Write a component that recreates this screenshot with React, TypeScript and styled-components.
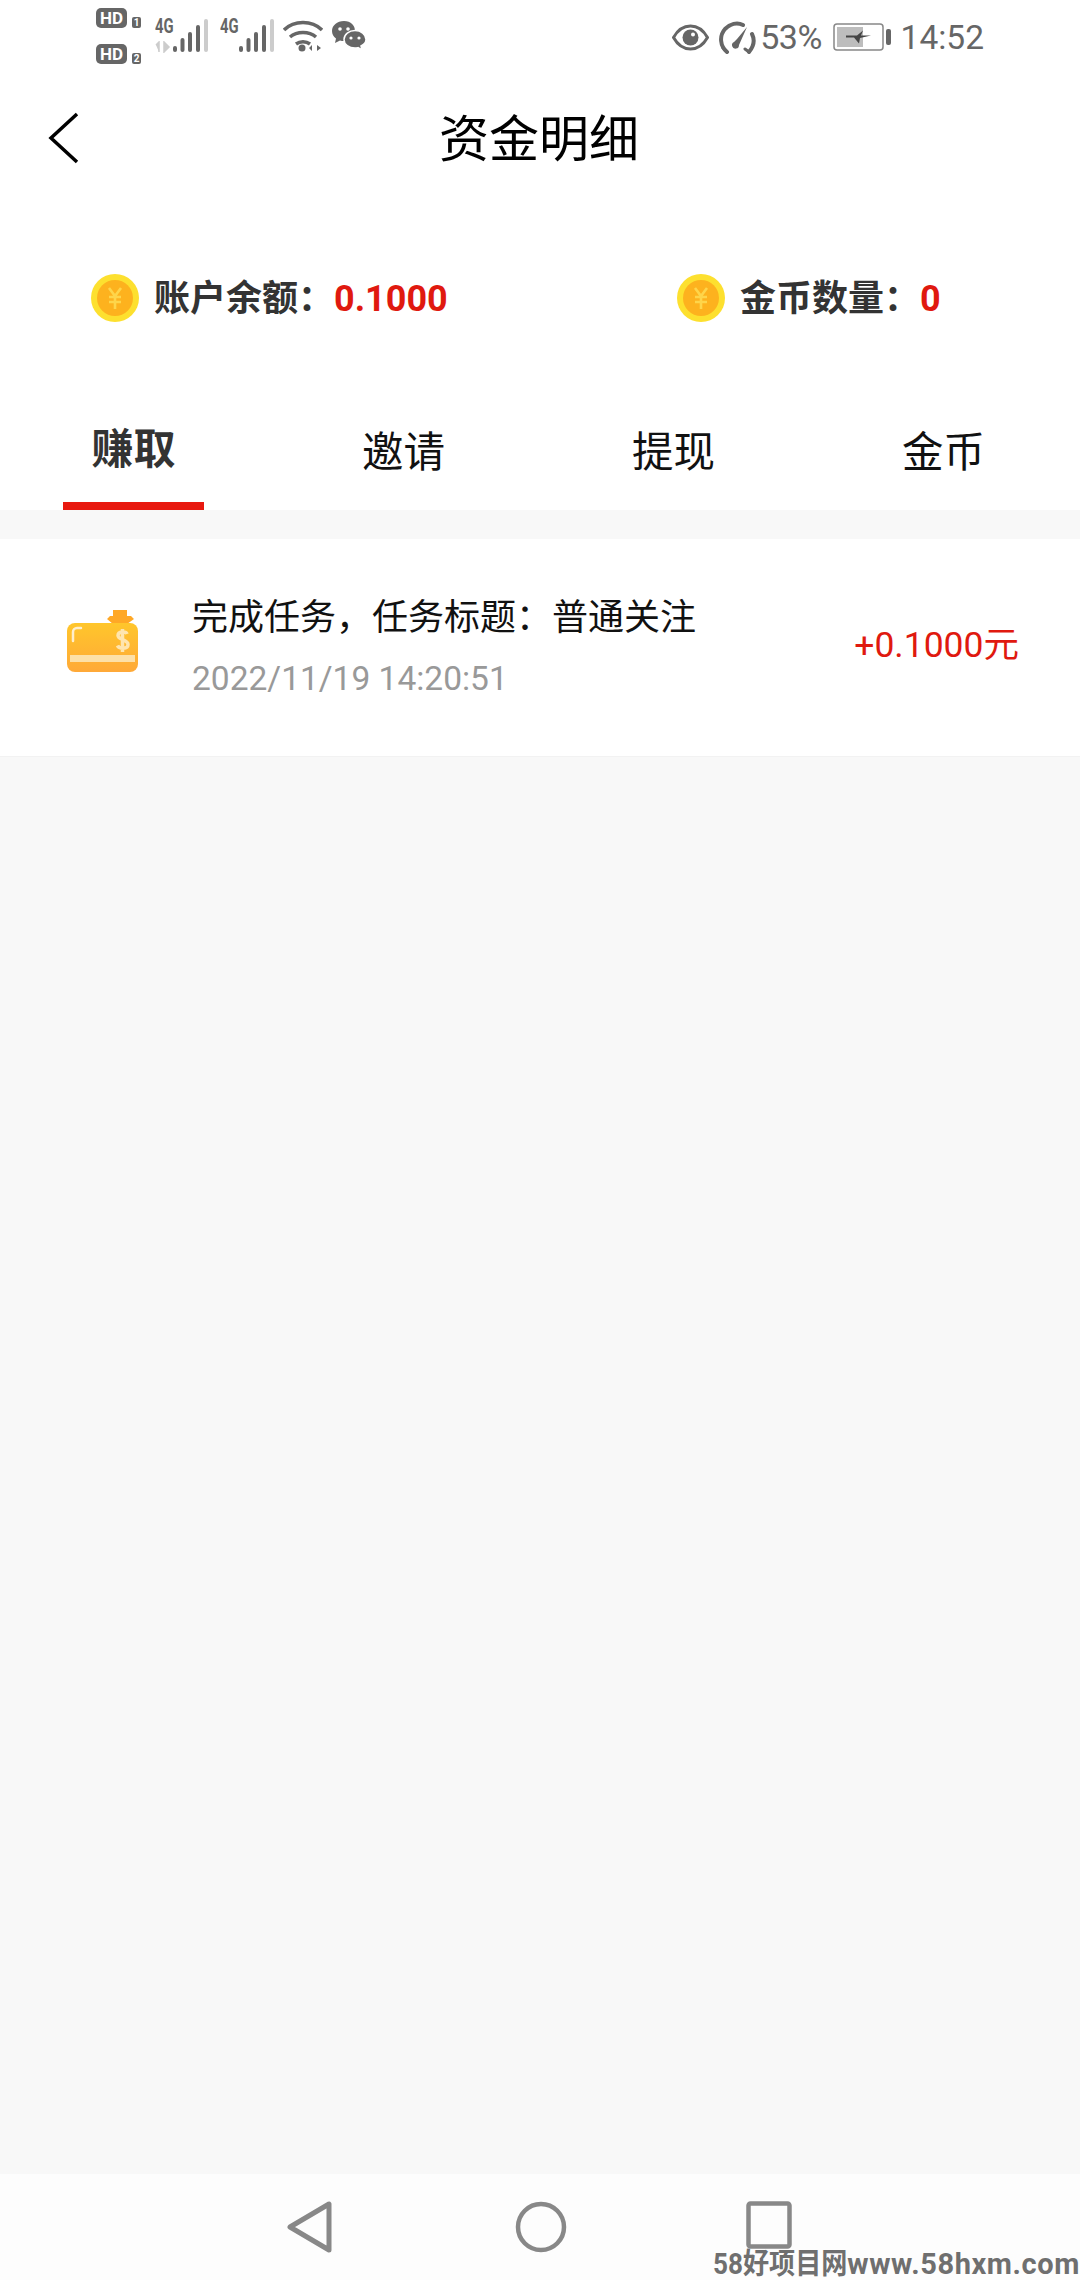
import React from 'react';
import styled, { createGlobalStyle } from 'styled-components';

const GlobalStyle = createGlobalStyle`
  html, body { margin: 0; padding: 0; background: #f8f8f8; }
  body { font-family: Roboto, "Noto Sans CJK SC", sans-serif; }
`;

const Page = styled.div`
  position: relative;
  display: flex;
  flex-direction: column;
  width: 1080px;
  height: 2280px;
  overflow: hidden;
  background: #f8f8f8;
`;

const Top = styled.div`
  background: #fff;
`;

const StatusBar = styled.div`
  display: flex;
  align-items: flex-start;
  justify-content: space-between;
  height: 76px;
  padding: 0 96px;
  color: #666;
`;

const StatusLeft = styled.div`
  display: flex;
  align-items: flex-start;
`;

const StatusRight = styled.div`
  display: flex;
  align-items: center;
  height: 74px;
`;

const HdColumn = styled.div`
  display: flex;
  flex-direction: column;
  gap: 16px;
  padding-top: 8px;
  width: 59px;
`;

const HdLine = styled.div`
  display: flex;
  align-items: flex-end;
  gap: 5px;
`;

const HdBadge = styled.span`
  display: flex;
  align-items: center;
  justify-content: center;
  width: 31px;
  height: 20px;
  border-radius: 5px;
  background: #666;
  color: #fff;
  font-size: 17px;
  font-weight: 700;
`;

const SimBadge = styled.span`
  display: flex;
  align-items: center;
  justify-content: center;
  width: 9px;
  height: 11px;
  border-radius: 2px;
  background: #666;
  color: #fff;
  font-size: 10px;
  font-weight: 700;
`;

const Signal = styled.div<{ $gap: number }>`
  position: relative;
  display: flex;
  align-items: flex-start;
  height: 54px;
  margin-right: ${p => p.$gap}px;
`;

const NetLabel = styled.span`
  display: block;
  width: 18px;
  margin-top: 16px;
  color: #666;
  font-size: 20px;
  font-weight: 700;
  line-height: 20px;
  transform: scaleX(0.74);
  transform-origin: left center;
`;

const StatusIcon = styled.svg<{ $mt?: number; $ml?: number }>`
  display: block;
  flex: none;
  margin-top: ${p => p.$mt ?? 0}px;
  margin-left: ${p => p.$ml ?? 0}px;
`;

const RateArrows = styled.svg`
  position: absolute;
  left: 0;
  top: 41px;
`;

const Percent = styled.span`
  margin-left: 2px;
  font-size: 34px;
  letter-spacing: -0.4px;
`;

const Clock = styled.span`
  margin-left: 10px;
  font-size: 33.5px;
`;

const Header = styled.div`
  position: relative;
  display: flex;
  align-items: center;
  justify-content: center;
  height: 124px;
`;

const BackIcon = styled.svg`
  position: absolute;
  left: 48px;
  top: 36px;
`;

const Title = styled.h1`
  margin: 0 2px 6px 0;
  color: #000;
  font-size: 50px;
  font-weight: 400;
`;

const Balances = styled.div`
  display: grid;
  grid-template-columns: 586px 1fr;
  align-items: center;
  height: 196px;
  padding-left: 91px;
`;

const Balance = styled.div`
  display: flex;
  align-items: center;
  gap: 15px;
  color: #333;
  font-size: 36px;
  font-weight: 700;
`;

const BalanceText = styled.span`
  margin-bottom: 6px;
`;

const BalanceValue = styled.span`
  color: #e0190f;
`;

const Tabs = styled.div`
  display: grid;
  grid-template-columns: repeat(4, 1fr);
  height: 114px;
`;

const Tab = styled.div<{ $active?: boolean }>`
  position: relative;
  display: flex;
  justify-content: center;
  padding-top: ${p => (p.$active ? 24 : 27)}px;
  padding-right: 3px;
  color: ${p => (p.$active ? '#333' : '#111')};
  font-size: ${p => (p.$active ? 42 : 41.5)}px;
  font-weight: ${p => (p.$active ? 700 : 400)};
  line-height: 60px;

  &::after {
    content: '';
    display: ${p => (p.$active ? 'block' : 'none')};
    position: absolute;
    left: 63px;
    bottom: 0;
    width: 141px;
    height: 8px;
    background: #e8190f;
  }
`;

const Records = styled.div`
  flex: 1;
  padding-top: 29px;
`;

const Record = styled.div`
  display: flex;
  align-items: center;
  height: 218px;
  padding: 0 61px 0 67px;
  background: #fff;
  border-bottom: 1px solid #f2f2f2;
  box-sizing: border-box;
`;

const WalletIcon = styled.svg`
  flex: none;
  margin-bottom: 13px;
`;

const RecordText = styled.div`
  flex: 1;
  margin-left: 54px;
`;

const RecordTitle = styled.div`
  color: #111;
  font-size: 36px;
  line-height: 62px;
`;

const RecordDate = styled.div`
  color: #999;
  font-size: 33.5px;
  line-height: 60px;
`;

const RecordAmount = styled.div`
  margin-bottom: 12px;
  color: #e0190f;
  font-size: 35.5px;
`;

const NavBar = styled.div`
  display: flex;
  align-items: flex-start;
  height: 106px;
  padding: 27px 0 0 287px;
  background: #fdfdfd;
  box-sizing: border-box;
`;

const NavIcon = styled.svg<{ $ml?: number }>`
  display: block;
  margin-left: ${p => p.$ml ?? 0}px;
`;

const Watermark = styled.div`
  position: absolute;
  right: 0;
  bottom: 0;
  display: flex;
  color: #6f6f6f;
  font-size: 29px;
  font-weight: 700;
  line-height: 32px;
  white-space: nowrap;
`;

const WatermarkCn = styled.span`
  display: block;
  width: 134px;
  transform: scaleX(0.9);
  transform-origin: left center;
`;

const WatermarkSite = styled.span`
  display: block;
  letter-spacing: 0.6px;
`;

function SignalBars({ first }: { first?: boolean }) {
  const bars = [
    [0, 46],
    [7.5, 38],
    [15, 32],
    [23, 25],
    [31, 19],
  ];
  return (
    <StatusIcon width="36" height="54" viewBox="0 0 36 54" $ml={first ? 0 : 1}>
      {bars.map(([x, top], i) => (
        <rect key={i} x={x} y={top} width="4" height={52 - top} rx="2" fill={i === 4 ? '#ccc' : '#666'} />
      ))}
    </StatusIcon>
  );
}

function CoinIcon() {
  return (
    <svg width="48" height="48" viewBox="0 0 48 48">
      <circle cx="24" cy="24" r="24" fill="#fde02f" />
      <circle cx="24" cy="24" r="18" fill="#fdb21e" />
      <path d="M18 14l6 8 6-8M24 22v13M18 23h12M18 28h12" fill="none" stroke="#fed54a" strokeWidth="2.6" />
    </svg>
  );
}

function Wallet() {
  return (
    <WalletIcon width="71" height="62" viewBox="0 0 71 62">
      <defs>
        <linearGradient id="wallet" x1="0" y1="0" x2="0" y2="1">
          <stop offset="0" stopColor="#ffc62b" />
          <stop offset="1" stopColor="#ffa938" />
        </linearGradient>
      </defs>
      <path d="M46 0h14v6h4l3 3-7 5h-14l-6-5 3-3h3z" fill="#ffa826" />
      <rect x="0" y="13" width="71" height="49" rx="8" fill="url(#wallet)" />
      <path d="M14 18h-4a4 4 0 0 0-4 4v9" fill="none" stroke="#ffeecb" strokeWidth="2.5" strokeLinecap="round" />
      <rect x="3" y="45" width="65" height="7" fill="#fde0a8" />
      <path d="M60 24c-1-3-9-3-9 1.500s10 4 10 9-9 4.500-10.500 1M55.500 19v23" fill="none" stroke="#ffe5ae" strokeWidth="3.500" />
    </WalletIcon>
  );
}

export default function App() {
  return (
    <Page>
      <GlobalStyle />
      <Top>
        <StatusBar>
          <StatusLeft>
            <HdColumn>
              <HdLine>
                <HdBadge>HD</HdBadge>
                <SimBadge>1</SimBadge>
              </HdLine>
              <HdLine>
                <HdBadge>HD</HdBadge>
                <SimBadge>2</SimBadge>
              </HdLine>
            </HdColumn>
            <Signal $gap={11}>
              <NetLabel>4G</NetLabel>
              <SignalBars first />
              <RateArrows width="16" height="12" viewBox="0 0 16 12">
                <path d="M1 4l3-3v10M9 1v10l5-5z" fill="#ccc" stroke="#ccc" strokeWidth="1.500" />
              </RateArrows>
            </Signal>
            <Signal $gap={8}>
              <NetLabel>4G</NetLabel>
              <SignalBars />
            </Signal>
            <StatusIcon width="40" height="36" viewBox="0 0 40 36" $mt={19}>
              <path d="M1 11c10-10 28-10 38 0M7 18c7-6 19-6 26 0M13 25c4-3 10-3 14 0" fill="none" stroke="#666" strokeWidth="3.500" />
              <circle cx="19" cy="29" r="3.500" fill="#666" />
              <path d="M26 29l3-3v6zM34 26v6l4-3z" fill="#666" />
            </StatusIcon>
            <StatusIcon width="34" height="30" viewBox="0 0 34 30" $mt={21} $ml={9}>
              <path d="M12 0C5 0 0 4.500 0 10c0 3 1.500 5.500 4 7.500L3 22l5-2.500c1.300.4 2.600.5 4 .5 7 0 11-4.500 11-10S19 0 12 0z" fill="#666" />
              <path d="M23 9.500c-6 0-11 4-11 9s5 8.500 11 8.500c1 0 2-.1 3-.4l4 2.400-1-4c3-1.500 5-4 5-6.500 0-5-5-9-11-9z" fill="#666" stroke="#fff" strokeWidth="1.500" />
              <circle cx="8" cy="8" r="1.800" fill="#fff" />
              <circle cx="16" cy="8" r="1.800" fill="#fff" />
              <circle cx="19" cy="17" r="1.600" fill="#fff" />
              <circle cx="27" cy="17" r="1.600" fill="#fff" />
            </StatusIcon>
          </StatusLeft>
          <StatusRight>
            <StatusIcon width="37" height="27" viewBox="0 0 37 27">
              <path d="M1.500 13.500C6 5.500 12 2 18.500 2S31 5.500 35.500 13.500C31 21.500 25 25 18.500 25S6 21.500 1.500 13.500z" fill="none" stroke="#666" strokeWidth="3" />
              <circle cx="18.500" cy="13.500" r="8" fill="#666" />
              <circle cx="21" cy="10.500" r="2" fill="#fff" />
            </StatusIcon>
            <StatusIcon width="39" height="33" viewBox="0 0 39 33" $ml={10.5}>
              <path d="M8 31C1 25 0 15 6 8c5-5 12-7 18-4" fill="none" stroke="#666" strokeWidth="4" strokeLinecap="round" />
              <path d="M33 13c3 6 2 12-3 18" fill="none" stroke="#666" strokeWidth="4" strokeLinecap="round" />
              <path d="M28 6L18 18l-3 3a3.500 3.500 0 1 0 5 3z" fill="#666" />
              <path d="M8 31l-4-4M30 31l-4-3" stroke="#666" strokeWidth="3" strokeLinecap="round" />
            </StatusIcon>
            <Percent>53%</Percent>
            <StatusIcon width="58" height="28" viewBox="0 0 58 28" $ml={10.5}>
              <rect x="1" y="1" width="49" height="26" rx="3" fill="#fff" stroke="#888" strokeWidth="1.500" />
              <rect x="4" y="4" width="26" height="20" fill="#bdbdbd" />
              <path d="M13 12.500h11l6-5-2 5h10l-11 2.500-1 5.500-5-6H13z" fill="#444" />
              <rect x="53" y="6" width="5" height="16" rx="2" fill="#666" />
            </StatusIcon>
            <Clock>14:52</Clock>
          </StatusRight>
        </StatusBar>
        <Header>
          <BackIcon width="32" height="52" viewBox="0 0 32 52">
            <path d="M29 2L3 26l26 24" fill="none" stroke="#000" strokeWidth="3.500" />
          </BackIcon>
          <Title>资金明细</Title>
        </Header>
        <Balances>
          <Balance>
            <CoinIcon />
            <BalanceText>
              账户余额：<BalanceValue>0.1000</BalanceValue>
            </BalanceText>
          </Balance>
          <Balance>
            <CoinIcon />
            <BalanceText>
              金币数量：<BalanceValue>0</BalanceValue>
            </BalanceText>
          </Balance>
        </Balances>
        <Tabs>
          <Tab $active>赚取</Tab>
          <Tab>邀请</Tab>
          <Tab>提现</Tab>
          <Tab>金币</Tab>
        </Tabs>
      </Top>
      <Records>
        <Record>
          <Wallet />
          <RecordText>
            <RecordTitle>完成任务，任务标题：普通关注</RecordTitle>
            <RecordDate>2022/11/19 14:20:51</RecordDate>
          </RecordText>
          <RecordAmount>+0.1000元</RecordAmount>
        </Record>
      </Records>
      <NavBar>
        <NavIcon width="45" height="52" viewBox="0 0 45 52">
          <path d="M42 3v46L3 26z" fill="none" stroke="#888" strokeWidth="5" strokeLinejoin="round" />
        </NavIcon>
        <NavIcon width="52" height="52" viewBox="0 0 52 52" $ml={183}>
          <circle cx="26" cy="26" r="23" fill="none" stroke="#888" strokeWidth="4.500" />
        </NavIcon>
        <NavIcon width="46" height="48" viewBox="0 0 46 48" $ml={179}>
          <rect x="2.500" y="2.500" width="41" height="43" rx="2" fill="none" stroke="#888" strokeWidth="4.500" />
        </NavIcon>
      </NavBar>
      <Watermark>
        <WatermarkCn>58好项目网</WatermarkCn>
        <WatermarkSite>www.58hxm.com</WatermarkSite>
      </Watermark>
    </Page>
  );
}
